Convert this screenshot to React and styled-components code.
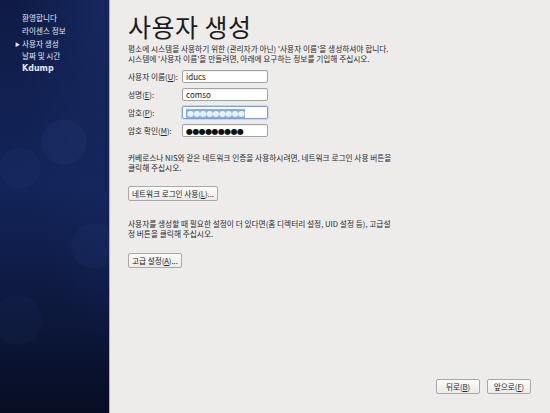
import React from 'react';
import styled, { createGlobalStyle } from 'styled-components';

const FONT = '"Noto Sans CJK KR", "Noto Sans", "DejaVu Sans", sans-serif';

const Global = createGlobalStyle`
  html, body {
    margin: 0;
    padding: 0;
    background: #edecea;
  }
  body {
    font-family: ${FONT};
  }
`;

const Page = styled.div`
  display: flex;
  width: 550px;
  height: 413px;
  overflow: hidden;
  background: #edecea;
`;

const Sidebar = styled.nav`
  flex-shrink: 0;
  box-sizing: border-box;
  width: 110px;
  height: 100%;
  padding: 12px 0 0 22px;
  border-right: 1px solid #a9b0c4;
  overflow: hidden;
  background:
    radial-gradient(circle at 64px 142px, rgba(70, 95, 170, 0.09) 0 22px, transparent 23px),
    radial-gradient(circle at 20px 168px, rgba(70, 95, 170, 0.06) 0 20px, transparent 21px),
    radial-gradient(circle at 18px 320px, rgba(70, 95, 170, 0.05) 0 24px, transparent 25px),
    radial-gradient(circle at 94px 246px, rgba(70, 95, 170, 0.07) 0 22px, transparent 23px),
    radial-gradient(ellipse at 100% 0%, #17285f 0%, transparent 60%),
    linear-gradient(180deg, #0f1b45 0%, #12245a 45%, #0c1638 80%, #070d22 100%);
`;

const NavItem = styled.div`
  position: relative;
  font-size: 7.6px;
  line-height: 12.8px;
  color: #e3e6ef;
  font-weight: ${p => (p.bold ? 700 : 400)};
  white-space: nowrap;
  ${p => p.bold && `font-family: "DejaVu Sans", sans-serif; font-size: 8px;`}
`;

const Arrow = styled.span`
  position: absolute;
  left: -7px;
  top: 0;
  font-size: 5px;
  color: #e3e6ef;
`;

const Main = styled.main`
  flex: 1;
  display: flex;
  flex-direction: column;
  padding: 8px 19px 0 18px;
  color: #222;
`;

const Title = styled.h1`
  margin: 0;
  font-family: ${FONT};
  font-size: 25px;
  font-weight: 400;
  line-height: 36px;
  color: #1c1c1c;
  letter-spacing: 0.5px;
`;

const Para = styled.p`
  margin: ${p => p.mt || 0}px 0 0 0;
  font-size: 7.7px;
  line-height: 10px;
  color: #2a2a2a;
  white-space: nowrap;
`;

const Form = styled.div`
  display: grid;
  grid-template-columns: 54px 86px;
  row-gap: 5px;
  margin-top: 6px;
  align-items: center;
`;

const Label = styled.label`
  font-size: 7.7px;
  color: #2a2a2a;
  white-space: nowrap;
`;

const Input = styled.div`
  box-sizing: border-box;
  height: 13px;
  padding: 0 3px;
  background: #fff;
  border: 1px solid ${p => (p.focused ? '#7d9fd6' : '#a3a3a3')};
  border-radius: 2px;
  box-shadow: ${p => (p.focused ? '0 0 0 1px #c5d6f0' : 'inset 0 1px 1px rgba(0,0,0,0.06)')};
  font-size: 8px;
  line-height: 11px;
  color: #222;
  white-space: nowrap;
  overflow: hidden;
`;

const Dots = styled.span`
  font-family: "DejaVu Sans", sans-serif;
  font-size: 8px;
  letter-spacing: -0.6px;
  color: #111;
`;

const SelDots = styled(Dots)`
  background: #86aee6;
  color: #eaf1fc;
  padding: 0 1px;
`;

const Button = styled.button`
  align-self: flex-start;
  margin-top: ${p => p.mt || 0}px;
  box-sizing: border-box;
  height: 15px;
  padding: 0 3px;
  font-family: ${FONT};
  font-size: 7.6px;
  line-height: 13px;
  color: #222;
  background: linear-gradient(#fbfbfa, #ecebe8);
  border: 1px solid #a8a8a5;
  border-radius: 2px;
  white-space: nowrap;
`;

const Footer = styled.div`
  display: flex;
  justify-content: flex-end;
  gap: 7px;
  margin-top: auto;
  margin-bottom: 19px;
`;

const NavButton = styled(Button)`
  width: 44px;
  padding: 0;
`;

export default function App() {
  return (
    <>
      <Global />
      <Page>
        <Sidebar>
          <NavItem>환영합니다</NavItem>
          <NavItem>라이센스 정보</NavItem>
          <NavItem><Arrow>▶</Arrow>사용자 생성</NavItem>
          <NavItem>날짜 및 시간</NavItem>
          <NavItem bold>Kdump</NavItem>
        </Sidebar>
        <Main>
          <Title>사용자 생성</Title>
          <Para>평소에 시스템을 사용하기 위한 (관리자가 아닌) '사용자 이름'을 생성하셔야 합니다.</Para>
          <Para>시스템에 '사용자 이름'을 만들려면, 아래에 요구하는 정보를 기입해 주십시오.</Para>
          <Form>
            <Label>사용자 이름(<u>U</u>):</Label>
            <Input>iducs</Input>
            <Label>성명(<u>E</u>):</Label>
            <Input>comso</Input>
            <Label>암호(<u>P</u>):</Label>
            <Input focused><SelDots>●●●●●●●●●</SelDots></Input>
            <Label>암호 확인(<u>M</u>):</Label>
            <Input><Dots>●●●●●●●●●</Dots></Input>
          </Form>
          <Para mt={16}>커베로스나 NIS와 같은 네트워크 인증을 사용하시려면, 네트워크 로그인 사용 버튼을</Para>
          <Para>클릭해 주십시오.</Para>
          <Button mt={13}>네트워크 로그인 사용(<u>L</u>)...</Button>
          <Para mt={18}>사용자를 생성할 때 필요한 설정이 더 있다면(홈 디렉터리 설정, UID 설정 등), 고급설</Para>
          <Para>정 버튼을 클릭해 주십시오.</Para>
          <Button mt={14}>고급 설정(<u>A</u>)...</Button>
          <Footer>
            <NavButton>뒤로(<u>B</u>)</NavButton>
            <NavButton>앞으로(<u>F</u>)</NavButton>
          </Footer>
        </Main>
      </Page>
    </>
  );
}
